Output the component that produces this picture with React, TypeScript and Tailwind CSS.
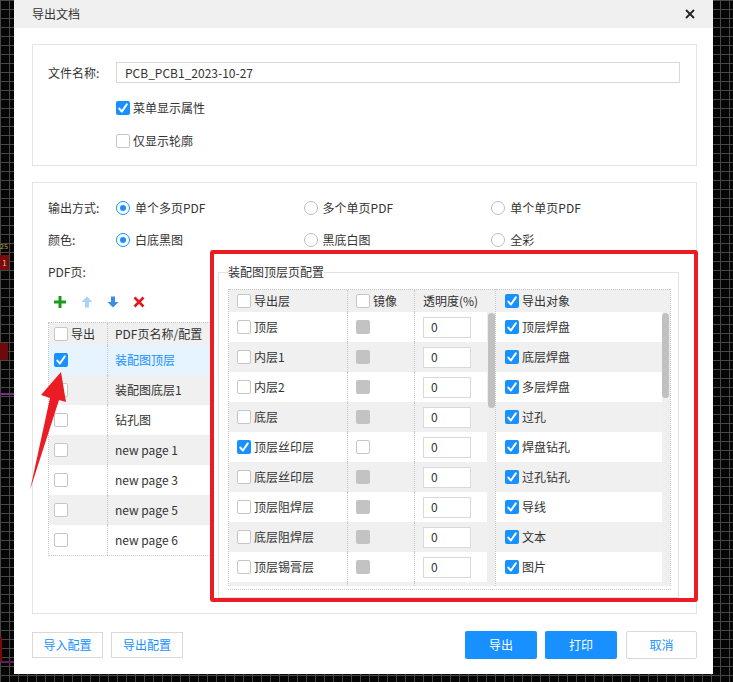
import React from 'react'

const layers: [string, boolean, boolean][] = [
  ['顶层', false, true],
  ['内层1', false, true],
  ['内层2', false, true],
  ['底层', false, true],
  ['顶层丝印层', true, false],
  ['底层丝印层', false, true],
  ['顶层阻焊层', false, true],
  ['底层阻焊层', false, true],
  ['顶层锡膏层', false, true],
]

const objects = ['顶层焊盘', '底层焊盘', '多层焊盘', '过孔', '焊盘钻孔', '过孔钻孔', '导线', '文本', '图片']

const pages = ['装配图顶层', '装配图底层1', '钻孔图', 'new page 1', 'new page 3', 'new page 5', 'new page 6']

function Box({ checked, disabled }: { checked?: boolean; disabled?: boolean }) {
  if (disabled) return <span className="block w-[14px] h-[14px] shrink-0 rounded-[2px] bg-[#c3c3c3]" />
  if (checked)
    return (
      <span className="flex w-[14px] h-[14px] shrink-0 rounded-[2px] bg-[#1890ff] items-center justify-center">
        <svg viewBox="0 0 14 14" className="w-[14px] h-[14px]">
          <path d="M3.3 7.6 L5.9 10.5 L10.8 3.4" fill="none" stroke="#fff" strokeWidth={2} strokeLinecap="round" strokeLinejoin="round" />
        </svg>
      </span>
    )
  return <span className="block w-[14px] h-[14px] shrink-0 rounded-[2px] border border-[#c6c6c6] bg-white" />
}

function Radio({ on, label }: { on?: boolean; label: string }) {
  return (
    <div className="w-[188px] flex items-center gap-[5px]">
      {on ? (
        <span className="flex w-[14px] h-[14px] rounded-full border border-[#1890ff] items-center justify-center">
          <span className="w-[6px] h-[6px] rounded-full bg-[#1890ff]" />
        </span>
      ) : (
        <span className="block w-[14px] h-[14px] rounded-full border border-[#bdbdbd]" />
      )}
      <span>{label}</span>
    </div>
  )
}

export default function App() {
  return (
    <div className="relative w-[733px] h-[682px] overflow-hidden bg-[#050505] bg-[linear-gradient(to_right,#474747_1px,transparent_1px),linear-gradient(to_bottom,#474747_1px,transparent_1px)] bg-[size:9px_9px] pl-[14px] font-['Noto_Sans_CJK_SC','Noto_Sans',sans-serif] text-[12px] text-[#333]">
      {/* pcb bits on the canvas */}
      <div className="absolute left-0 top-[243px] text-[7px] leading-[7px] text-[#c9a635]">25</div>
      <div className="absolute left-0 top-[255px] w-[9px] h-[15px] bg-[#7a0b0b] text-[8px] leading-[15px] text-[#e6b4b4] text-center">1</div>
      <div className="absolute left-0 top-[343px] w-[8px] h-[17px] bg-[#6e0a0a]" />
      <div className="absolute left-0 top-[393px] w-[14px] h-[2px] bg-[#7b2a8b]" />
      <div className="absolute left-0 top-[637px] w-[2px] h-[26px] bg-[#7a0b0b]" />
      <div className="absolute left-0 top-[661px] w-[14px] h-[2px] bg-[#6a1a5a]" />

      {/* dialog */}
      <div className="w-[699px] h-[674px] bg-white flex flex-col">
        <div className="h-[28px] bg-[#f0f0f0] flex items-center justify-between pl-[18px] pr-[18px]">
          <span className="text-[12px] text-[#333]">导出文档</span>
          <svg viewBox="0 0 10 10" className="w-[10px] h-[10px]">
            <path d="M1 1 L9 9 M9 1 L1 9" stroke="#222" strokeWidth={1.8} />
          </svg>
        </div>

        <div className="flex flex-col pl-[18px] pr-[16px]">
          {/* file name panel */}
          <div className="mt-[16px] h-[122px] border border-[#e4e4e4] pt-[17px] pl-[15px] pr-[16px]">
            <div className="flex items-center h-[21px]">
              <span className="w-[68px]">文件名称:</span>
              <div className="flex-1 h-[21px] border border-[#d9d9d9] pl-[8px] flex items-center text-[12px] text-[#333]">PCB_PCB1_2023-10-27</div>
            </div>
            <div className="mt-[15px] ml-[68px] flex items-center gap-[3px] h-[20px]">
              <Box checked />
              <span>菜单显示属性</span>
            </div>
            <div className="mt-[13px] ml-[68px] flex items-center gap-[3px] h-[20px]">
              <Box />
              <span>仅显示轮廓</span>
            </div>
          </div>

          {/* export options panel */}
          <div className="mt-[16px] border border-[#e4e4e4] pt-[15px] pl-[15px] pr-[17px] pb-[15px]">
            <div className="flex items-center h-[20px]">
              <span className="w-[68px]">输出方式:</span>
              <Radio on label="单个多页PDF" />
              <Radio label="多个单页PDF" />
              <Radio label="单个单页PDF" />
            </div>
            <div className="mt-[12px] flex items-center h-[20px]">
              <span className="w-[68px]">颜色:</span>
              <Radio on label="白底黑图" />
              <Radio label="黑底白图" />
              <Radio label="全彩" />
            </div>

            <div className="mt-[12px] flex items-start">
              {/* pdf pages */}
              <div className="w-[164px] flex flex-col">
                <div className="h-[20px] flex items-center">PDF页:</div>
                <div className="mt-[12px] h-[16px] flex items-center gap-[14px] pl-[5px]">
                  <svg viewBox="0 0 14 14" className="w-[14px] h-[14px]">
                    <path d="M7 1 V13 M1 7 H13" stroke="#1d9a1d" strokeWidth={3} />
                  </svg>
                  <svg viewBox="0 0 12 12" className="w-[12px] h-[12px]">
                    <path d="M6 0.5 L11.5 6 H8 V11.5 H4 V6 H0.5 Z" fill="#a8d4f7" />
                  </svg>
                  <svg viewBox="0 0 12 12" className="w-[12px] h-[12px]">
                    <path d="M6 11.5 L11.5 6 H8 V0.5 H4 V6 H0.5 Z" fill="#3a8ee6" />
                  </svg>
                  <svg viewBox="0 0 12 12" className="w-[12px] h-[12px]">
                    <path d="M1.5 1.5 L10.5 10.5 M10.5 1.5 L1.5 10.5" stroke="#e5161d" strokeWidth={2.6} />
                  </svg>
                </div>
                <div className="mt-[12px] border-l border-b border-dotted border-[#c8c8c8]">
                  <div className="flex h-[23px] bg-[#f0f0f0] border-t border-dotted border-[#c8c8c8]">
                    <div className="w-[59px] flex items-center gap-[3px] pl-[5px] border-r border-dotted border-[#c8c8c8]">
                      <Box />
                      <span>导出</span>
                    </div>
                    <div className="flex-1 flex items-center pl-[7px]">PDF页名称/配置</div>
                  </div>
                  {pages.map((p, i) => (
                    <div
                      key={p}
                      className={i === 0 ? 'flex h-[30px] bg-[#e6f4ff] text-[#1890ff]' : i % 2 === 1 ? 'flex h-[30px] bg-[#f0f0f0]' : 'flex h-[30px] bg-white'}
                    >
                      <div className="w-[59px] flex items-center pl-[5px] border-r border-dotted border-[#c8c8c8]">
                        <Box checked={i === 0} />
                      </div>
                      <div className="flex-1 flex items-center pl-[7px]">{p}</div>
                    </div>
                  ))}
                </div>
              </div>

              {/* layer config */}
              <fieldset className="ml-[6px] w-[461px] border border-[#e2e2e2] pl-[9px] pr-[7px] pb-[7px]">
                <legend className="h-[20px] leading-[20px] text-[12px] text-[#333]">装配图顶层页配置</legend>
                <div className="mt-[7px] border-b border-dotted border-[#c8c8c8] pb-[3px]">
                  <div className="flex">
                    {/* left grid */}
                    <div className="w-[267px] border-l border-dotted border-[#c8c8c8]">
                      <div className="flex h-[23px] bg-[#f0f0f0] border-t border-dotted border-[#c8c8c8]">
                        <div className="w-[119px] flex items-center gap-[3px] pl-[8px] border-r border-dotted border-[#c8c8c8]">
                          <Box />
                          <span>导出层</span>
                        </div>
                        <div className="w-[67px] flex items-center gap-[3px] pl-[8px] border-r border-dotted border-[#c8c8c8]">
                          <Box />
                          <span>镜像</span>
                        </div>
                        <div className="flex-1 flex items-center pl-[8px]">透明度(%)</div>
                      </div>
                      <div className="flex h-[274px] overflow-hidden">
                        <div className="w-[258px]">
                          {layers.map(([name, on, dis], i) => (
                            <div key={name} className={i % 2 === 1 ? 'flex h-[30px] bg-[#f0f0f0]' : 'flex h-[30px] bg-white'}>
                              <div className="w-[119px] flex items-center gap-[3px] pl-[8px] border-r border-dotted border-[#c8c8c8]">
                                <Box checked={on} />
                                <span>{name}</span>
                              </div>
                              <div className="w-[67px] flex items-center pl-[8px] border-r border-dotted border-[#c8c8c8]">
                                <Box disabled={dis} />
                              </div>
                              <div className="flex-1 flex items-center pl-[8px]">
                                <div className="w-[48px] h-[21px] border border-[#d9d9d9] bg-white pl-[7px] flex items-center">0</div>
                              </div>
                            </div>
                          ))}
                          {/* next row, scrolled out of view */}
                          <div className="flex h-[30px] bg-[#f0f0f0]">
                            <div className="w-[119px] border-r border-dotted border-[#c8c8c8]" />
                            <div className="w-[67px] border-r border-dotted border-[#c8c8c8]" />
                            <div className="flex-1 pl-[8px] pt-[5px]">
                              <div className="w-[48px] h-[21px] border border-[#d9d9d9] bg-white" />
                            </div>
                          </div>
                        </div>
                        <div className="w-[8px] bg-[#efefef] pt-[1px] pl-[1px]">
                          <div className="w-[7px] h-[95px] rounded-[4px] bg-[#c1c1c1]" />
                        </div>
                      </div>
                    </div>
                    {/* right grid */}
                    <div className="w-[176px] border-l border-r border-dotted border-[#c8c8c8]">
                      <div className="flex h-[23px] bg-[#f0f0f0] border-t border-dotted border-[#c8c8c8] items-center gap-[3px] pl-[9px]">
                        <Box checked />
                        <span>导出对象</span>
                      </div>
                      <div className="flex h-[274px] overflow-hidden">
                        <div className="flex-1">
                          {objects.map((o, i) => (
                            <div key={o} className={i % 2 === 1 ? 'flex h-[30px] bg-[#f0f0f0] items-center gap-[3px] pl-[9px]' : 'flex h-[30px] bg-white items-center gap-[3px] pl-[9px]'}>
                              <Box checked />
                              <span>{o}</span>
                            </div>
                          ))}
                          <div className="h-[30px] bg-[#f0f0f0]" />
                        </div>
                        <div className="w-[8px] bg-[#efefef] pt-[1px]">
                          <div className="w-[7px] h-[85px] rounded-[4px] bg-[#c1c1c1]" />
                        </div>
                      </div>
                    </div>
                  </div>
                </div>
              </fieldset>
            </div>
          </div>

          {/* buttons */}
          <div className="mt-[17px] flex items-center">
            <button className="w-[71px] h-[26px] border border-[#d9d9d9] bg-white text-[#1890ff] text-[12px]">导入配置</button>
            <button className="ml-[8px] w-[72px] h-[26px] border border-[#d9d9d9] bg-white text-[#1890ff] text-[12px]">导出配置</button>
            <div className="flex-1" />
            <button className="w-[72px] h-[28px] rounded-[2px] bg-[#1890ff] text-white text-[12px]">导出</button>
            <button className="ml-[8px] w-[72px] h-[28px] rounded-[2px] bg-[#1890ff] text-white text-[12px]">打印</button>
            <button className="ml-[9px] w-[71px] h-[28px] rounded-[2px] border border-[#d9d9d9] bg-white text-[#1890ff] text-[12px]">取消</button>
          </div>
        </div>
      </div>

      {/* red annotations */}
      <div className="absolute left-[210px] top-[250px] w-[488px] h-[352px] border-[4px] border-[#ec1c24] rounded-[3px]" />
      <svg className="absolute left-0 top-0 w-[733px] h-[682px] pointer-events-none" viewBox="0 0 733 682">
        <polygon points="61,372 66,402 59,400 30,490 50,398 41,395" fill="#ec1c24" />
      </svg>
    </div>
  )
}
